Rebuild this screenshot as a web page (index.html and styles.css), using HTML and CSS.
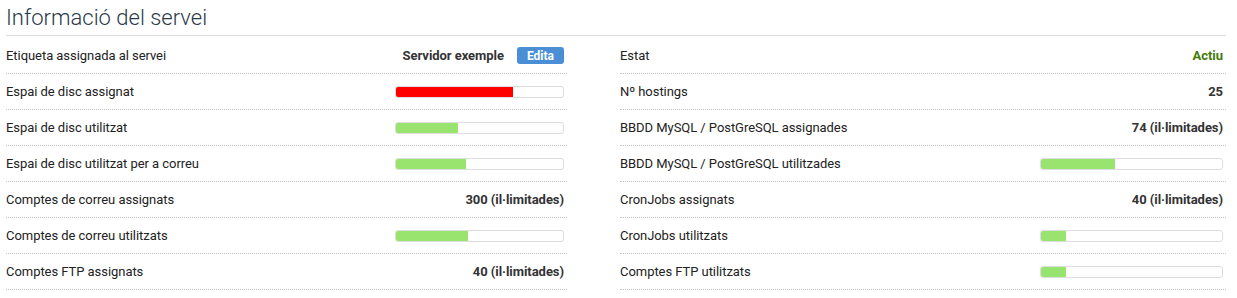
FILE: index.html
```html
<!DOCTYPE html>
<html lang="ca">
<head>
  <meta charset="UTF-8" />
  <meta name="viewport" content="width=device-width, initial-scale=1.0"/>
  <title>Informació del servei</title>
  <link rel="stylesheet" href="styles.css">
</head>
<body>

  <div class="panell">
    <h2 class="titol">Informació del servei</h2>

    <div class="columnes">
      <div class="columna">
        <div class="fila">
          <span class="etiqueta">Etiqueta assignada al servei</span>
          <span class="valor">Servidor exemple <button class="btn-edita">Edita</button></span>
        </div>
        <div class="fila">
          <span class="etiqueta">Espai de disc assignat</span>
          <div class="barra"><div class="omplert vermell" style="width: 70%"></div></div>
        </div>
        <div class="fila">
          <span class="etiqueta">Espai de disc utilitzat</span>
          <div class="barra"><div class="omplert" style="width: 37%"></div></div>
        </div>
        <div class="fila">
          <span class="etiqueta">Espai de disc utilitzat per a correu</span>
          <div class="barra"><div class="omplert" style="width: 42%"></div></div>
        </div>
        <div class="fila">
          <span class="etiqueta">Comptes de correu assignats</span>
          <span class="valor">300 (il·limitades)</span>
        </div>
        <div class="fila">
          <span class="etiqueta">Comptes de correu utilitzats</span>
          <div class="barra"><div class="omplert" style="width: 43%"></div></div>
        </div>
        <div class="fila">
          <span class="etiqueta">Comptes FTP assignats</span>
          <span class="valor">40 (il·limitades)</span>
        </div>
      </div>

      <div class="columna">
        <div class="fila">
          <span class="etiqueta">Estat</span>
          <span class="valor actiu">Actiu</span>
        </div>
        <div class="fila">
          <span class="etiqueta">Nº hostings</span>
          <span class="valor">25</span>
        </div>
        <div class="fila">
          <span class="etiqueta">BBDD MySQL / PostGreSQL assignades</span>
          <span class="valor">74 (il·limitades)</span>
        </div>
        <div class="fila">
          <span class="etiqueta">BBDD MySQL / PostGreSQL utilitzades</span>
          <div class="barra"><div class="omplert" style="width: 41%"></div></div>
        </div>
        <div class="fila">
          <span class="etiqueta">CronJobs assignats</span>
          <span class="valor">40 (il·limitades)</span>
        </div>
        <div class="fila">
          <span class="etiqueta">CronJobs utilitzats</span>
          <div class="barra"><div class="omplert" style="width: 14%"></div></div>
        </div>
        <div class="fila">
          <span class="etiqueta">Comptes FTP utilitzats</span>
          <div class="barra"><div class="omplert" style="width: 14%"></div></div>
        </div>
      </div>
    </div>
  </div>

</body>
</html>
```

FILE: styles.css
```css
body {
  margin: 0;
  font-family: Roboto, 'Liberation Sans', Arial, sans-serif;
  background: #fff;
  color: #222;
}

.panell {
  width: 1220px;
  padding-left: 6px;
}

.titol {
  margin: 0;
  padding: 6px 0 5px;
  font-size: 22px;
  line-height: 24px;
  font-weight: 300;
  color: #2b3a48;
  border-bottom: 1px solid #ddd;
}

.columnes {
  display: grid;
  grid-template-columns: 561px 1fr;
  column-gap: 53px;
  padding-top: 2px;
}

.fila {
  display: flex;
  align-items: center;
  justify-content: space-between;
  height: 35px;
  padding-right: 3px;
  border-bottom: 1px dotted #c4c4c4;
  font-size: 13px;
  letter-spacing: -0.05px;
}

.valor {
  font-weight: bold;
  color: #333;
  display: flex;
  align-items: center;
}

.actiu {
  color: #437a08;
}

.btn-edita {
  margin-left: 13px;
  height: 17px;
  padding: 0 10px;
  border: none;
  border-radius: 3px;
  background-color: #4a8fd6;
  color: white;
  font-family: Roboto, 'Liberation Sans', Arial, sans-serif;
  font-size: 12px;
  font-weight: bold;
  cursor: pointer;
}

.barra {
  width: 30%;
  height: 10px;
  border: 1px solid #ddd;
  border-radius: 3px;
  background: #fff;
  overflow: hidden;
}

.omplert {
  height: 100%;
  background-color: #98e46f;
}

.omplert.vermell {
  background-color: #ff0000;
}
```
